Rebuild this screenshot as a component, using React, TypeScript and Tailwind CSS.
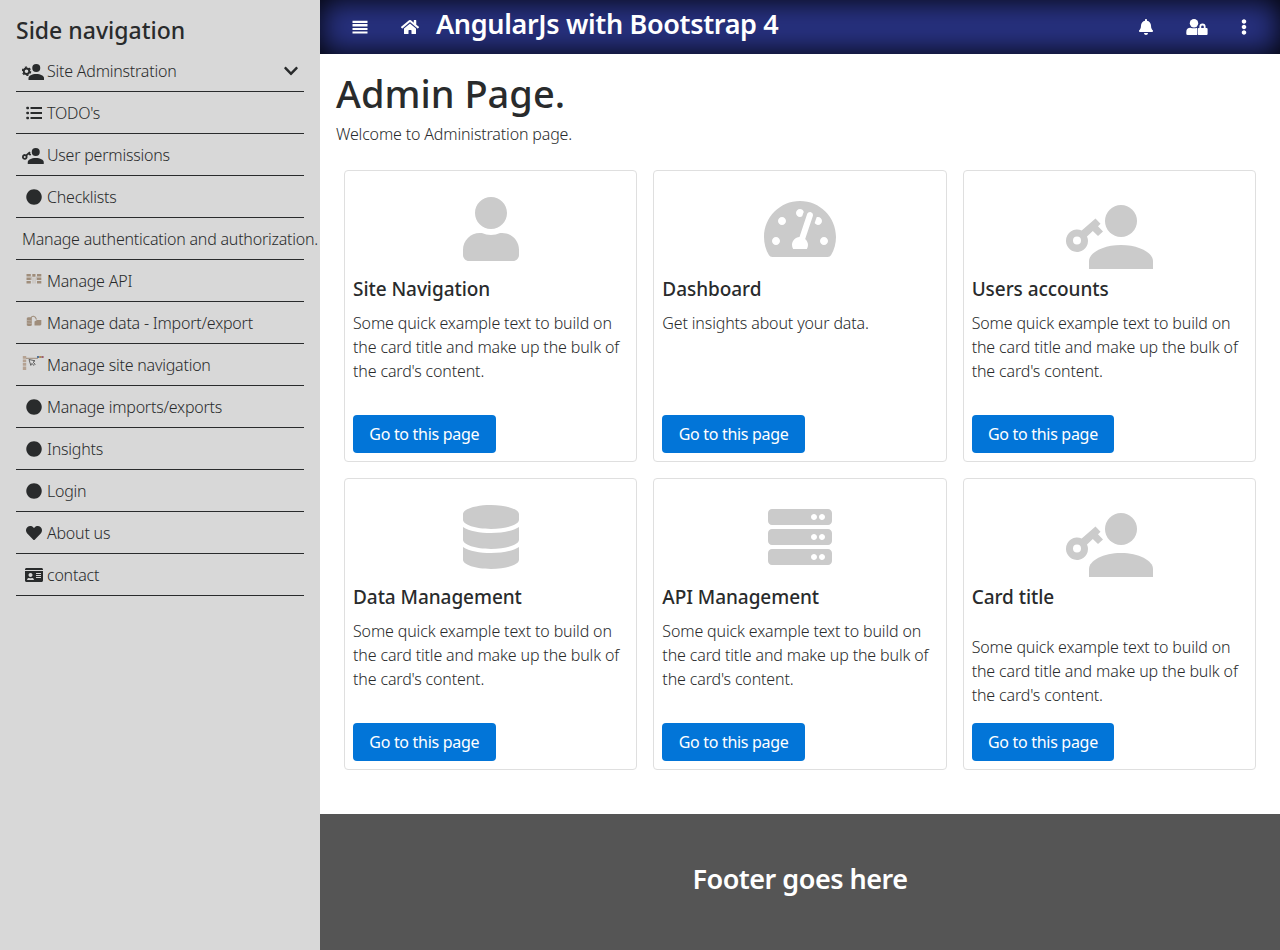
import type { ReactNode } from 'react';
import {
  FaBell, FaChevronDown, FaCircle, FaDatabase, FaEllipsisV, FaHeart, FaHome,
  FaIdCard, FaServer, FaTachometerAlt, FaUser,
} from 'react-icons/fa';

function UserKeyIcon({ className }: { className: string }) {
  return (
    <svg viewBox="0 0 88 64" fill="currentColor" className={className}>
      <circle cx="55" cy="16" r="16" />
      <path d="M23 64v-8c0-8.500 14.500-16 32-16s32 7.500 32 16v8z" />
      <path
        fillRule="evenodd"
        d="M0 35.500a11 11 0 0 1 15.700-9.900L29.500 13.500l5 5.200-2.500 2.500 5 5.200-5 4.600-5.200-5-5.800 5.400a11 11 0 1 1-21 4.100zM11 31.500a4 4 0 1 0 0 8 4 4 0 0 0 0-8z"
      />
    </svg>
  );
}

function UserGearIcon({ className }: { className: string }) {
  return (
    <svg viewBox="0 0 88 64" fill="currentColor" className={className}>
      <circle cx="57" cy="16" r="16" />
      <path d="M26 64v-8c0-8.500 13.500-16 31-16s31 7.500 31 16v8z" />
      <circle cx="18" cy="29" r="11" fill="none" stroke="currentColor" strokeWidth="7.500" />
      <circle cx="18" cy="29" r="16.500" fill="none" stroke="currentColor" strokeWidth="5" strokeDasharray="8.640 8.640" />
    </svg>
  );
}

function MenuIcon() {
  return (
    <svg viewBox="0 0 16 16" fill="currentColor" className="size-4">
      <path d="M.5 1.700h15v2.300H.5zM.5 5.100h15v2.300H.5zM.5 9h15v2.100H.5zM.5 12.400h15v2.200H.5z" />
    </svg>
  );
}

function ListIcon() {
  return (
    <svg viewBox="0 0 16 16" fill="currentColor" className="size-4">
      <path d="M4.500 2h11.500v2H4.500zM4.500 7h11.500v2H4.500zM4.500 12h11.500v2H4.500z" />
      <rect x="0.300" y="1.700" width="2.700" height="2.600" rx=".8" />
      <rect x="0.300" y="6.700" width="2.700" height="2.600" rx=".8" />
      <rect x="0.300" y="11.700" width="2.700" height="2.600" rx=".8" />
    </svg>
  );
}

function UserLockIcon() {
  return (
    <svg viewBox="0 0 22 16" fill="currentColor" className="h-4 w-[22px]">
      <circle cx="8" cy="4.200" r="4.200" />
      <path d="M.3 13c0-3 1.700-4.300 4-4.300q3.600 1 6.800 0V16H1.600Q.3 16 .3 14.700z" />
      <path
        fillRule="evenodd"
        d="M11.700 10q0-1 1-1h.7V7.700a3.100 3.100 0 0 1 6.200 0V9h1q1 0 1 1v5q0 1-1 1h-7.900q-1 0-1-1zM15.200 9h2.600V7.700a1.300 1.300 0 0 0-2.600 0z"
      />
    </svg>
  );
}

function ApiIcon() {
  return (
    <svg viewBox="0 0 16 12" className="-mt-[3px] h-3 w-4" fill="#9f8d7b">
      <path d="M.5 1h4.300v2.500H.5zM.5 4.500h4.300v2.500H.5zM.5 8h4.300v2.500H.5zM11 1h4.300v2.500H11zM11 4.500h4.300v2.500H11zM11 8h4.300v2.500H11zM6.300 1h3.200v2.800H6.300z" />
      <path d="M5 3.500h1V7H5zM10 3.500h1V7h-1zM6.500 4.500h1v6h-1zM8.600 4.500h1v6h-1z" opacity=".35" />
    </svg>
  );
}

function DataIcon() {
  return (
    <svg viewBox="0 0 16 12" className="-mt-[3px] h-3 w-4" fill="#9f8d7b">
      <path d="M.8 3.200c0-1.200 5-1.200 5 0v7c0 1-5 1-5 0z" />
      <path d="M8.500 6.500l2.500-1.500h4.300v4.500l-1 1H8.500z" />
      <path d="M5 3C6 .5 9 .5 10.500 4.500" fill="none" stroke="#9f8d7b" strokeWidth="1.100" />
      <path d="M1 5.500l4.500.4M1 8l4.500.4" stroke="#d8d8d8" strokeWidth=".4" />
    </svg>
  );
}

function SiteMapIcon() {
  return (
    <svg viewBox="0 0 22 16" className="mr-[2px] -mt-[4px] h-4 w-[22px]">
      <path d="M.8 1h3.400v2.700H.8zM.8 4.500h3.400v2.700H.8zM.8 8h3.400v2.700H.8zM.8 11.500h3.400v3.500H.8z" fill="#b5a292" />
      <path d="M4 3.300h12" stroke="#9f8d7b" />
      <path d="M15 1h2.200v2H15z" fill="#55759a" />
      <path d="M17.200 1h2.200v2h-2.200z" fill="#b08c50" />
      <path d="M19.400 1h2.200v2h-2.200z" fill="#9b6070" />
      <path d="M7 4.500l6 1.300-2 1.400 2.200 2-1.200 1.200-2.200-2-1 2z" fill="#ddd" stroke="#555" strokeWidth=".9" />
    </svg>
  );
}

const circle = <FaCircle className="size-4" />;

const navItems: { label: string; icon?: ReactNode; expandable?: boolean }[] = [
  { label: 'Site Adminstration', icon: <UserGearIcon className="mt-[3px] mr-[2px] h-4 w-[22px]" />, expandable: true },
  { label: "TODO's", icon: <ListIcon /> },
  { label: 'User permissions', icon: <UserKeyIcon className="mt-[3px] mr-[2px] h-4 w-[22px]" /> },
  { label: 'Checklists', icon: circle },
  { label: 'Manage authentication and authorization.' },
  { label: 'Manage API', icon: <ApiIcon /> },
  { label: 'Manage data - Import/export', icon: <DataIcon /> },
  { label: 'Manage site navigation', icon: <SiteMapIcon /> },
  { label: 'Manage imports/exports', icon: circle },
  { label: 'Insights', icon: circle },
  { label: 'Login', icon: circle },
  { label: 'About us', icon: <FaHeart className="size-4" /> },
  { label: 'contact', icon: <FaIdCard className="h-4 w-[18px]" /> },
];

const bulk = "Some quick example text to build on the card title and make up the bulk of the card's content.";

const cards: { title: string; text: string; icon: ReactNode; lowText?: boolean }[] = [
  { title: 'Site Navigation', text: bulk, icon: <FaUser className="h-16 w-14" /> },
  { title: 'Dashboard', text: 'Get insights about your data.', icon: <FaTachometerAlt className="h-16 w-[72px]" /> },
  { title: 'Users accounts', text: bulk, icon: <UserKeyIcon className="mt-2 ml-px h-16 w-[88px]" /> },
  { title: 'Data Management', text: bulk, icon: <FaDatabase className="h-16 w-14" /> },
  { title: 'API Management', text: bulk, icon: <FaServer className="size-16" /> },
  { title: 'Card title', text: bulk, icon: <UserKeyIcon className="mt-2 ml-px h-16 w-[88px]" />, lowText: true },
];

export default function App() {
  return (
    <div className="flex h-[950px] w-[1280px] overflow-hidden bg-white font-['Noto_Sans',sans-serif] text-[#292b2c]">
      <aside className="w-80 shrink-0 bg-[#d8d8d8] px-4 pt-4">
        <h2 className="h-[34px] text-[23px] leading-[29px] font-medium">Side navigation</h2>
        <nav>
          {navItems.map((item) => (
            <div key={item.label} className="flex h-[42px] w-[288px] items-center border-b border-[#292b2c] pl-[6px]">
              {item.icon && <span className="flex w-[25px] shrink-0 justify-center pr-px">{item.icon}</span>}
              <span className="text-base leading-6 font-light tracking-[-0.22px] whitespace-nowrap">{item.label}</span>
              {item.expandable && <FaChevronDown className="mr-[5px] ml-auto size-4" />}
            </div>
          ))}
        </nav>
      </aside>

      <div className="flex min-w-0 flex-1 flex-col">
        <header className="flex h-[54px] shrink-0 items-center bg-[#283282] pr-7 pl-8 text-white shadow-[inset_0_0_30px_#000]">
          <MenuIcon />
          <FaHome className="ml-8 h-4 w-5" />
          <h1 className="ml-4 -mt-[6px] text-[27px] leading-8 font-semibold tracking-[-0.34px]">AngularJs with Bootstrap 4</h1>
          <FaBell className="ml-auto h-4 w-4" />
          <span className="ml-8">
            <UserLockIcon />
          </span>
          <FaEllipsisV className="ml-7 size-4" />
        </header>

        <main className="flex-1 px-4 pt-[15px]">
          <h1 className="text-[38px] leading-[48px] font-medium">Admin Page.</h1>
          <p className="mt-[5px] text-base leading-6 font-light tracking-[-0.16px]">Welcome to Administration page.</p>
          <div className="mt-6 grid grid-cols-3 gap-4 px-2">
            {cards.map((card) => (
              <section key={card.title} className="flex h-[292px] flex-col items-start rounded border border-[#dfdfdf] p-2">
                <div className="flex h-[99px] w-full shrink-0 items-start justify-center pt-[18px] text-[#cbcbcb]">
                  {card.icon}
                </div>
                <h3 className="text-[19px] leading-[22px] font-medium tracking-[-0.06px]">{card.title}</h3>
                <p className={`text-base leading-6 font-light tracking-[-0.14px] ${card.lowText ? 'mt-[27px]' : 'mt-[11px]'}`}>
                  {card.text}
                </p>
                <button className="mt-auto h-[38px] w-[142.5px] rounded bg-[#0275d8] text-base tracking-[-0.3px] text-white">
                  Go to this page
                </button>
              </section>
            ))}
          </div>
        </main>

        <footer className="flex h-[136px] shrink-0 items-center justify-center bg-[#555] pb-[7px] text-white">
          <h2 className="text-[27px] leading-8 font-semibold tracking-[-0.5px]">Footer goes here</h2>
        </footer>
      </div>
    </div>
  );
}
